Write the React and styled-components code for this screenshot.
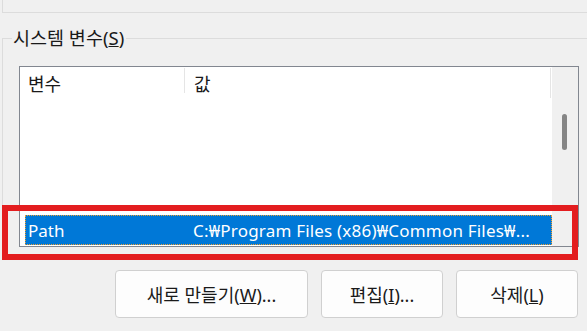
import styled, { createGlobalStyle } from 'styled-components';

const Global = createGlobalStyle`
  html, body {
    margin: 0;
    padding: 0;
    background: #f0f0f0;
    font-family: "Noto Sans", "Noto Sans CJK KR", sans-serif;
    color: #1a1a1a;
    overflow: hidden;
  }
`;

const Page = styled.div`
  position: relative;
  width: 587px;
  height: 331px;
`;

const PrevGroup = styled.div`
  margin-left: 2px;
  height: 12px;
  border-left: 1px solid #dcdcdc;
  border-bottom: 1px solid #dcdcdc;
`;

const Group = styled.fieldset`
  margin: 13px -20px 0 2px;
  padding: 0 0 0 16px;
  border: 1px solid #dcdcdc;
  border-right: none;
  border-bottom: none;
  min-width: 0;
`;

const Legend = styled.legend`
  margin-left: -7px;
  padding: 0 2px 0 1px;
  font-size: 18.5px;
  line-height: 24px;
  color: #1a1a1a;
`;

const ListBox = styled.div`
  margin-top: 16px;
  width: 558px;
  height: 179px;
  border: 1px solid #828790;
  background: #fff;
  display: grid;
  grid-template-columns: 532px 26px;
`;

const Main = styled.div`
  display: flex;
  flex-direction: column;
`;

const Header = styled.div`
  display: grid;
  grid-template-columns: 166px 1fr;
  height: 31px;
  font-size: 18px;
`;

const HeaderCell = styled.div`
  position: relative;
  padding-left: ${(p) => p.$pad}px;
  display: flex;
  align-items: center;

  &::after {
    content: '';
    position: absolute;
    right: 1px;
    top: 1px;
    height: ${(p) => p.$sep}px;
    width: 1px;
    background: #e5e5e5;
  }
`;

const Body = styled.div`
  flex: 1;
  display: flex;
  flex-direction: column;
  justify-content: flex-end;
  padding-bottom: 1px;
`;

const Row = styled.div`
  margin-left: 5px;
  height: 30px;
  display: grid;
  grid-template-columns: 161px 1fr;
  align-items: center;
  background: ${(p) => (p.$selected ? '#0078d7' : 'transparent')};
  color: ${(p) => (p.$selected ? '#fff' : '#1a1a1a')};
  outline: ${(p) => (p.$selected ? '1px dotted #f0a030' : 'none')};
  outline-offset: -1px;
  font-size: 17px;
  white-space: nowrap;
  overflow: hidden;
`;

const Cell = styled.span`
  padding-left: ${(p) => p.$pad}px;
  letter-spacing: ${(p) => p.$track || 0}px;
  overflow: hidden;
`;

const ScrollTrack = styled.div`
  background: #f0f0f0;
  padding: 47px 0 0 10px;
`;

const Thumb = styled.div`
  width: 5px;
  height: 36px;
  border-radius: 3px;
  background: #858585;
`;

const Buttons = styled.div`
  display: flex;
  justify-content: flex-end;
  gap: 13px;
  margin-top: 23px;
  padding-right: 9px;
`;

const Button = styled.button`
  width: ${(p) => p.$w}px;
  height: 48px;
  border: 1px solid #d0d0d0;
  border-radius: 4px;
  background: #fdfdfd;
  font-family: inherit;
  font-size: 18px;
  color: #1a1a1a;
  padding: 0;
`;

const Highlight = styled.div`
  position: absolute;
  left: 2px;
  top: 205px;
  width: 564px;
  height: 43px;
  border: 6px solid #e31d1f;
  pointer-events: none;
`;

export default function App() {
  return (
    <Page>
      <Global />
      <PrevGroup />
      <Group>
        <Legend>
          시스템 변수(<u>S</u>)
        </Legend>
        <ListBox>
          <Main>
            <Header>
              <HeaderCell $pad={8} $sep={25}>변수</HeaderCell>
              <HeaderCell $pad={8} $sep={30}>값</HeaderCell>
            </Header>
            <Body>
              <Row $selected>
                <Cell $pad={3}>Path</Cell>
                <Cell $pad={7} $track={0.2}>C:₩Program Files (x86)₩Common Files₩...</Cell>
              </Row>
            </Body>
          </Main>
          <ScrollTrack>
            <Thumb />
          </ScrollTrack>
        </ListBox>
      </Group>
      <Buttons>
        <Button $w={193}>
          새로 만들기(<u>W</u>)...
        </Button>
        <Button $w={122}>
          편집(<u>I</u>)...
        </Button>
        <Button $w={122}>
          삭제(<u>L</u>)
        </Button>
      </Buttons>
      <Highlight />
    </Page>
  );
}
